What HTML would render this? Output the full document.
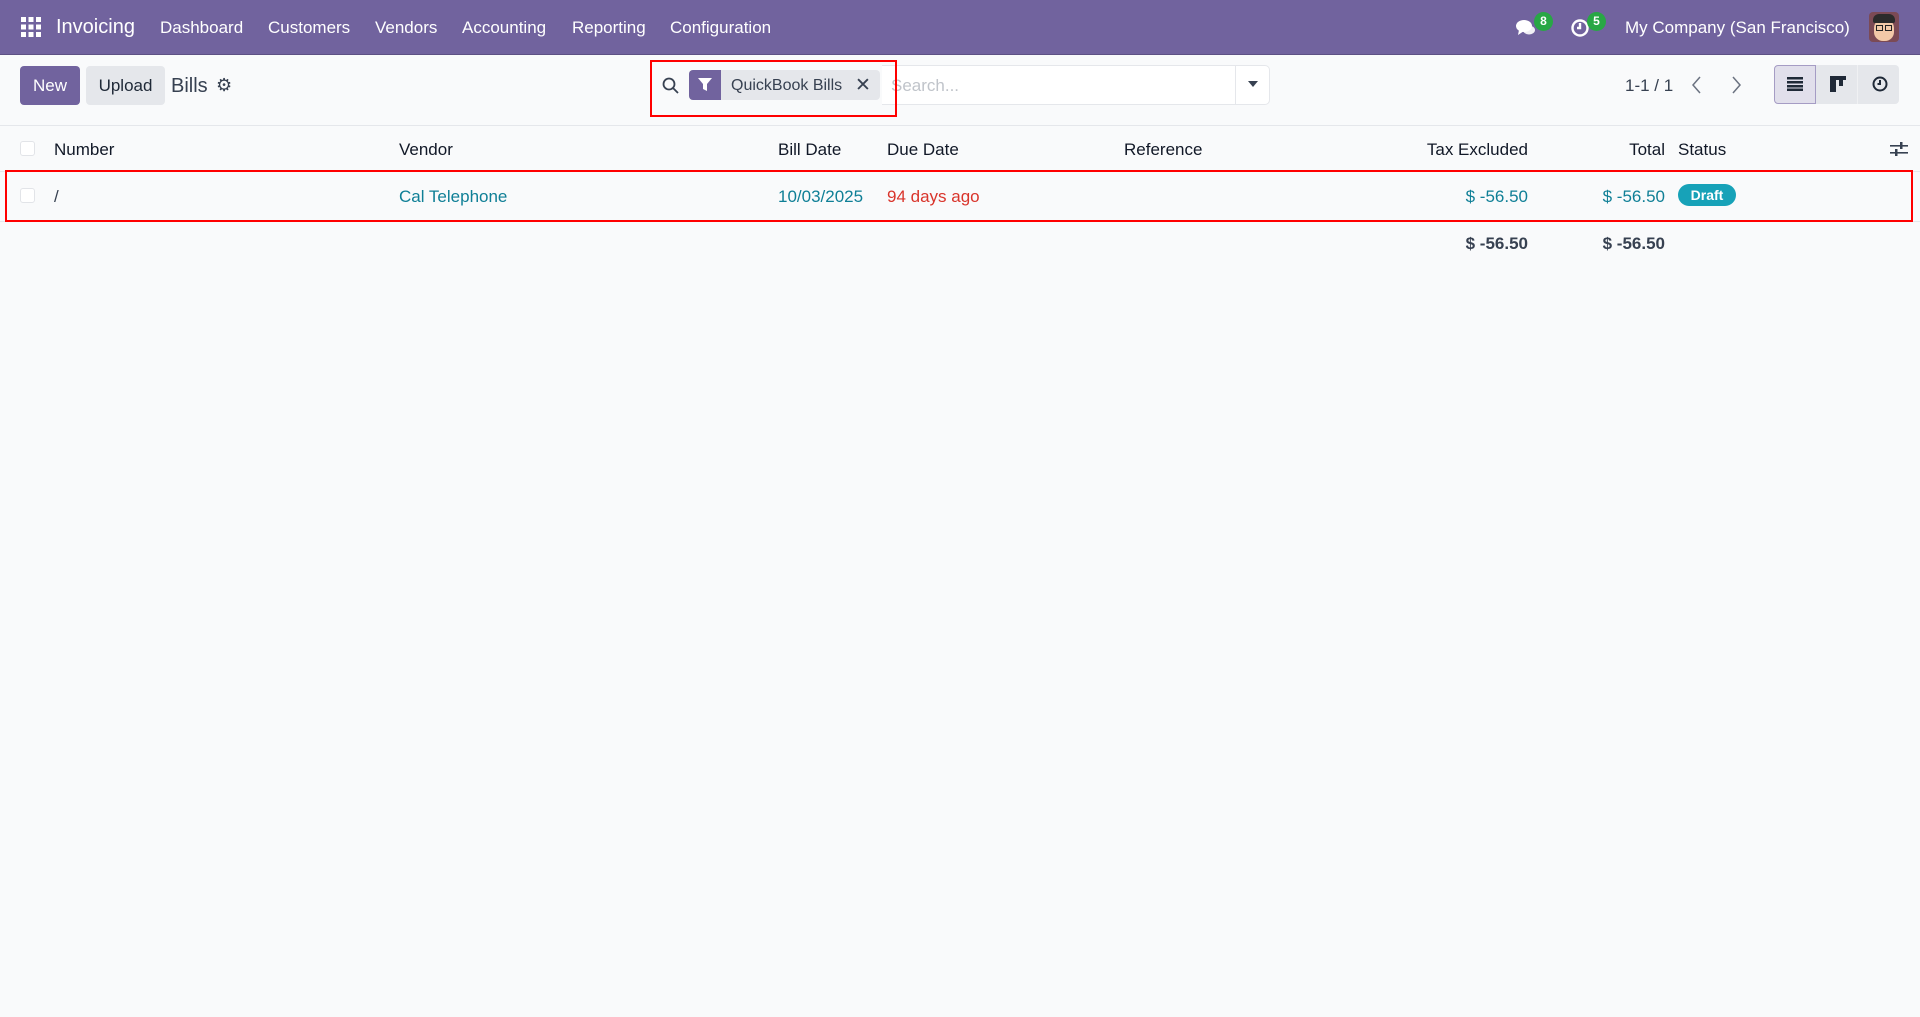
<!DOCTYPE html>
<html><head><meta charset="utf-8"><style>
*{box-sizing:border-box;margin:0;padding:0}
body{width:1920px;height:1017px;background:#f9fafb;font-family:"Liberation Sans",sans-serif;color:#374151;font-size:17px;position:relative;overflow:hidden}
.a{position:absolute;white-space:nowrap}
.nav{position:absolute;left:0;top:0;width:1920px;height:55px;background:#71639e;color:#fff;border-bottom:1px solid #5d5184}
.nav .a{top:18px;font-size:17px}
.btn{position:absolute;border-radius:4px;font-size:17px;display:flex;align-items:center;justify-content:center}
.hd{color:#111827;top:140px}
.teal{color:#0f7f96}
</style></head><body>
<div class="nav">
 <svg class="a" style="left:21px;top:17px" width="20" height="20" viewBox="0 0 20 20" fill="#fff">
  <rect x="0" y="0" width="5" height="5"/><rect x="7.5" y="0" width="5" height="5"/><rect x="15" y="0" width="5" height="5"/>
  <rect x="0" y="7.5" width="5" height="5"/><rect x="7.5" y="7.5" width="5" height="5"/><rect x="15" y="7.5" width="5" height="5"/>
  <rect x="0" y="15" width="5" height="5"/><rect x="7.5" y="15" width="5" height="5"/><rect x="15" y="15" width="5" height="5"/></svg>
 <div class="a" style="left:56px;top:16px;font-size:20px">Invoicing</div>
 <div class="a" style="left:160px">Dashboard</div>
 <div class="a" style="left:268px">Customers</div>
 <div class="a" style="left:375px">Vendors</div>
 <div class="a" style="left:462px">Accounting</div>
 <div class="a" style="left:572px">Reporting</div>
 <div class="a" style="left:670px">Configuration</div>
 <svg class="a" style="left:1515px;top:18px" width="22" height="20" viewBox="0 0 22 20" fill="#fff"><ellipse cx="9" cy="8" rx="8" ry="6"/><path d="M4 12 L3 17 L9 13Z"/><ellipse cx="14" cy="12" rx="6" ry="4.5" opacity=".9"/></svg>
 <div class="a" style="left:1534px;top:12px;width:19px;height:19px;border-radius:10px;background:#28a745;font-size:12px;text-align:center;line-height:19px;font-weight:bold">8</div>
 <svg class="a" style="left:1570px;top:18px" width="20" height="20" viewBox="0 0 20 20" fill="none" stroke="#fff" stroke-width="2.4"><circle cx="10" cy="10" r="7.5"/><path d="M10 5v5h-3"/></svg>
 <div class="a" style="left:1587px;top:12px;width:19px;height:19px;border-radius:10px;background:#28a745;font-size:12px;text-align:center;line-height:19px;font-weight:bold">5</div>
 <div class="a" style="left:1625px">My Company (San Francisco)</div>
 <div class="a" style="left:1869px;top:12px;width:30px;height:30px;border-radius:4px;background:#7b4a55;overflow:hidden">
  <div style="position:absolute;left:5px;top:7px;width:20px;height:22px;border-radius:9px;background:#f2c9a8"></div>
  <div style="position:absolute;left:4px;top:2px;width:22px;height:9px;border-radius:6px 6px 2px 2px;background:#2b2b2b"></div>
  <div style="position:absolute;left:7px;top:13px;width:7px;height:6px;border:1.5px solid #222"></div>
  <div style="position:absolute;left:16px;top:13px;width:7px;height:6px;border:1.5px solid #222"></div>
 </div>
</div>

<div class="btn" style="left:20px;top:66px;width:60px;height:39px;background:#71639e;color:#fff">New</div>
<div class="btn" style="left:86px;top:66px;width:79px;height:39px;background:#e5e7eb;color:#1f2937">Upload</div>
<div class="a" style="left:171px;top:75px;font-size:20px;color:#374151">Bills</div>
<div class="a" style="left:216px;top:75px;font-size:18px;color:#374151">&#9881;</div>

<div class="a" style="left:882px;top:65px;width:388px;height:40px;border:1px solid #e5e7eb;border-radius:0 5px 5px 0;background:#fff;border-left:none"></div>
<div class="a" style="left:1235px;top:65px;width:1px;height:40px;background:#e5e7eb"></div>
<div class="a" style="left:1248px;top:81px;width:0;height:0;border-left:5px solid transparent;border-right:5px solid transparent;border-top:6px solid #374151"></div>
<div class="a" style="left:891px;top:76px;color:#c0c4ca">Search...</div>
<svg class="a" style="left:662px;top:77px" width="17" height="17" viewBox="0 0 17 17" fill="none" stroke="#374151" stroke-width="1.8"><circle cx="7" cy="7" r="5.5"/><path d="M11 11l5 5"/></svg>
<div class="a" style="left:689px;top:70px;width:191px;height:30px;background:#e5e7eb;border-radius:4px"></div>
<div class="a" style="left:689px;top:70px;width:32px;height:30px;background:#71639e;border-radius:4px 0 0 4px"></div>
<svg class="a" style="left:698px;top:78px" width="14" height="14" viewBox="0 0 14 14" fill="#fff"><path d="M0 0h14l-5 6v7l-4-2V6z"/></svg>
<div class="a" style="left:731px;top:77px;font-size:16px;color:#374151">QuickBook Bills</div>
<div class="a" style="left:855px;top:74px;font-size:19px;color:#374151">&#x2715;</div>
<div class="a" style="left:650px;top:60px;width:247px;height:57px;border:2px solid #f00"></div>

<div class="a" style="left:1625px;top:76px;color:#374151">1-1 / 1</div>
<svg class="a" style="left:1690px;top:75px" width="14" height="20" viewBox="0 0 14 20" fill="none" stroke="#6b7280" stroke-width="1.5"><path d="M10 2L3 10l7 8"/></svg>
<svg class="a" style="left:1729px;top:75px" width="14" height="20" viewBox="0 0 14 20" fill="none" stroke="#6b7280" stroke-width="1.5"><path d="M4 2l7 8-7 8"/></svg>
<div class="a" style="left:1774px;top:65px;width:42px;height:39px;background:#e1dfeb;border:1px solid #a59cc4;border-radius:4px 0 0 4px"></div>
<div class="a" style="left:1816px;top:65px;width:83px;height:39px;background:#e5e7eb;border-radius:0 4px 4px 0"></div>
<div class="a" style="left:1857px;top:65px;width:1px;height:39px;background:#f0f1f3"></div>
<svg class="a" style="left:1787px;top:77px" width="16" height="14" fill="#1f2937"><rect y="0" width="16" height="2.5"/><rect y="4" width="16" height="2.5"/><rect y="8" width="16" height="2.5"/><rect y="11.5" width="16" height="2.5"/></svg>
<svg class="a" style="left:1830px;top:76px" width="16" height="16" fill="#1f2937"><rect width="16" height="4"/><rect width="6" height="16"/><rect x="9" width="4" height="10"/></svg>
<svg class="a" style="left:1872px;top:76px" width="16" height="16" fill="none" stroke="#1f2937" stroke-width="2"><circle cx="8" cy="8" r="6.5"/><path d="M8 4v4H5.5"/></svg>
<div class="a" style="left:0;top:125px;width:1920px;height:1px;background:#e5e7eb"></div>

<div class="a" style="left:20px;top:141px;width:15px;height:15px;border:1px solid #e2e4e8;border-radius:3px;background:#fff"></div>
<div class="a hd" style="left:54px">Number</div>
<div class="a hd" style="left:399px">Vendor</div>
<div class="a hd" style="left:778px">Bill Date</div>
<div class="a hd" style="left:887px">Due Date</div>
<div class="a hd" style="left:1124px">Reference</div>
<div class="a hd" style="right:392px">Tax Excluded</div>
<div class="a hd" style="right:255px">Total</div>
<div class="a hd" style="left:1678px">Status</div>
<svg class="a" style="left:1890px;top:141px" width="18" height="17" fill="#374151"><rect y="4" width="18" height="1.6"/><rect x="10" y="1" width="2.5" height="7"/><rect y="11" width="18" height="1.6"/><rect x="5" y="8" width="2.5" height="7"/></svg>
<div class="a" style="left:0;top:171px;width:1920px;height:1px;background:#e5e7eb"></div>

<div class="a" style="left:20px;top:188px;width:15px;height:15px;border:1px solid #e2e4e8;border-radius:3px;background:#fff"></div>
<div class="a" style="left:54px;top:187px">/</div>
<div class="a teal" style="left:399px;top:187px">Cal Telephone</div>
<div class="a teal" style="left:778px;top:187px">10/03/2025</div>
<div class="a" style="left:887px;top:187px;color:#d9342b">94 days ago</div>
<div class="a teal" style="right:392px;top:187px">$ -56.50</div>
<div class="a teal" style="right:255px;top:187px">$ -56.50</div>
<div class="a" style="left:1678px;top:184px;width:58px;height:22px;border-radius:11px;background:#17a2b8;color:#fff;font-size:14px;font-weight:bold;text-align:center;line-height:22px">Draft</div>
<div class="a" style="left:0;top:221px;width:1920px;height:1px;background:#e5e7eb"></div>
<div class="a" style="left:5px;top:170px;width:1908px;height:52px;border:2.5px solid #f00"></div>

<div class="a" style="right:392px;top:234px;font-weight:bold;color:#374151">$ -56.50</div>
<div class="a" style="right:255px;top:234px;font-weight:bold;color:#374151">$ -56.50</div>
</body></html>
